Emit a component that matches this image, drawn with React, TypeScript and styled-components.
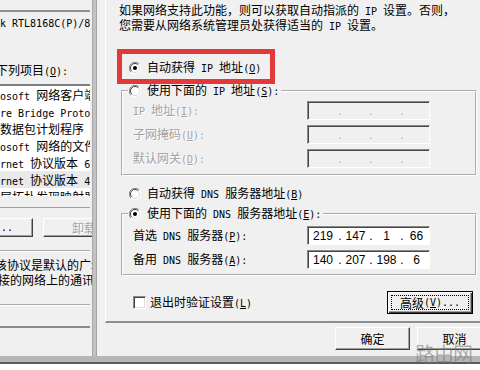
import React from "react";
import styled, { createGlobalStyle } from "styled-components";

const BG = "#f0f0f0";
const DISABLED = "#a2a2a2";

const GlobalStyle = createGlobalStyle`
  html, body { margin: 0; padding: 0; background: #ffffff; }
  body {
    font-family: "Noto Sans CJK SC", "Noto Sans", sans-serif;
    font-size: 12px;
    color: #000;
  }
  * { box-sizing: border-box; }
`;

const Lat = styled.span`
  font-family: "DejaVu Sans Mono", "Liberation Mono", monospace;
  font-size: 10px;
`;

const Key = styled.span`
  text-decoration: underline;
  text-underline-offset: 1px;
`;

function Txt({ s }: { s: string }) {
  const nodes: React.ReactNode[] = [];
  s.split(/(&.)/).forEach((tok, i) => {
    if (tok.length === 2 && tok[0] === "&") {
      nodes.push(
        <Lat key={`k${i}`}>
          <Key>{tok[1]}</Key>
        </Lat>
      );
      return;
    }
    tok.split(/([\x20-\x7e]+)/).forEach((p, j) => {
      if (!p) return;
      nodes.push(
        j % 2 ? (
          <Lat key={`${i}-${j}`}>{p}</Lat>
        ) : (
          <React.Fragment key={`${i}-${j}`}>{p}</React.Fragment>
        )
      );
    });
  });
  return <>{nodes}</>;
}

/* ---------- page frame ---------- */

const Screen = styled.div`
  position: relative;
  width: 480px;
  height: 370px;
  overflow: hidden;
  display: flex;
  flex-direction: column;
  background: ${BG};
  line-height: 14px;
`;

const Main = styled.div`
  display: flex;
  height: 356px;
  flex: none;
`;

const BottomBand = styled.div`
  height: 6px;
  flex: none;
  background: #b6b6b6;
`;

const BottomEdge = styled.div`
  height: 2px;
  flex: none;
  background: #5a5a5a;
`;

const BottomRest = styled.div`
  flex: 1;
  background: #ffffff;
`;

const VBar = styled.div`
  width: 5px;
  flex: none;
  background: #c2c2c2;
  border-left: 1px solid #a9a9a9;
  border-right: 1px solid #a3a3a3;
`;

/* ---------- background window ---------- */

const BackWindow = styled.div`
  width: 92px;
  flex: none;
  overflow: hidden;
  display: flex;
  flex-direction: column;
`;

const AdapterBox = styled.div`
  margin-top: 10px;
  width: 90px;
  height: 22px;
  border-top: 2px solid #909090;
  padding-top: 3px;
  white-space: nowrap;
  overflow: hidden;
`;

const ShiftLine = styled.div<{ $shift: number; $mt?: number }>`
  white-space: nowrap;
  margin-left: ${(p) => p.$shift}px;
  margin-top: ${(p) => p.$mt ?? 0}px;
`;

const ListBox = styled.div`
  margin-top: 5px;
  width: 90px;
  background: #ffffff;
  border-top: 2px solid #7d7d7d;
`;

const ListViewport = styled.div`
  height: 110px;
  overflow: hidden;
`;

const ListRow = styled.div<{ $selected?: boolean }>`
  height: 17px;
  line-height: 17px;
  white-space: nowrap;
  background: ${(p) => (p.$selected ? "#e9e9e9" : "transparent")};
`;

const HScroll = styled.div`
  height: 12px;
  background: ${BG};
  border-bottom: 1px solid #a0a0a0;
`;

const BackButtons = styled.div`
  margin-top: 10px;
  display: flex;
  gap: 10px;
`;

const Btn = styled.div<{ $w: number; $h: number; $ml?: number; $disabled?: boolean }>`
  flex: none;
  width: ${(p) => p.$w}px;
  height: ${(p) => p.$h}px;
  margin-left: ${(p) => p.$ml ?? 0}px;
  display: flex;
  align-items: center;
  justify-content: center;
  background: ${BG};
  border-top: 1px solid #ffffff;
  border-left: 1px solid #ffffff;
  border-right: 1px solid #404040;
  border-bottom: 1px solid #404040;
  box-shadow: inset -1px -1px 0 #a0a0a0;
  white-space: nowrap;
  color: ${(p) => (p.$disabled ? DISABLED : "#000")};
  text-shadow: ${(p) => (p.$disabled ? "1px 1px 0 #fff" : "none")};
`;

const DescGroup = styled.div`
  margin-top: 13px;
  width: 90px;
  border-top: 2px groove #ffffff;
  border-bottom: 2px groove #ffffff;
  padding: 5px 0 17px 0;
  line-height: 15px;
`;

const BackPageEdge = styled.div`
  margin-top: 20px;
  width: 90px;
  border-top: 2px solid #8a8a8a;
`;

/* ---------- front dialog ---------- */

const Dialog = styled.div`
  flex: 1;
  min-width: 0;
  padding-left: 8px;
  display: flex;
  flex-direction: column;
  overflow: hidden;
`;

const TabPage = styled.div`
  height: 323px;
  flex: none;
  border-left: 1px solid #ffffff;
  border-bottom: 2px solid #8e8e8e;
  padding-left: 11px;
  display: flex;
  flex-direction: column;
  align-items: flex-start;
`;

const Intro = styled.div`
  margin: 3px 0 0 2px;
  line-height: 13px;
  white-space: nowrap;
`;

const RedBox = styled.div`
  margin-top: 16px;
  width: 158px;
  height: 35px;
  flex: none;
  border: 5px solid #e2393b;
  display: flex;
  align-items: center;
  padding: 2px 0 0 7px;
`;

const OptionRow = styled.div<{ $mt?: number; $ml?: number }>`
  display: flex;
  align-items: center;
  gap: 6px;
  height: 14px;
  white-space: nowrap;
  margin-top: ${(p) => p.$mt ?? 0}px;
  margin-left: ${(p) => p.$ml ?? 0}px;
`;

const GroupBox = styled.fieldset<{ $mt: number }>`
  margin: ${(p) => p.$mt}px 0 0 4px;
  width: 356px;
  min-width: 0;
  padding: 0;
  border: 2px groove #ffffff;
`;

const Legend = styled.legend`
  margin-left: 5px;
  padding: 0 2px 0 1px;
  line-height: 14px;
`;

const GroupRows = styled.div<{ $mt: number; $pb: number }>`
  display: flex;
  flex-direction: column;
  gap: 5px;
  padding: ${(p) => p.$mt}px 0 ${(p) => p.$pb}px 10px;
`;

const FieldRow = styled.div`
  display: flex;
  align-items: center;
  height: 19px;
`;

const FieldLabel = styled.div<{ $disabled?: boolean }>`
  width: 174px;
  flex: none;
  white-space: nowrap;
  color: ${(p) => (p.$disabled ? DISABLED : "#000")};
  text-shadow: ${(p) => (p.$disabled ? "1px 1px 0 #fff" : "none")};
`;

const IpBox = styled.div<{ $enabled?: boolean }>`
  width: 123px;
  height: 19px;
  flex: none;
  display: grid;
  grid-template-columns: 30px 4px 27px 4px 27px 4px 1fr;
  align-items: center;
  background: ${(p) => (p.$enabled ? "#ffffff" : BG)};
  border-top: 1px solid #8a8a8a;
  border-left: 1px solid #8a8a8a;
  border-right: 1px solid #ffffff;
  border-bottom: 1px solid #ffffff;
  box-shadow: inset 1px 1px 0 #454545;
  font-family: "Liberation Sans", Arial, sans-serif;
  font-size: 12px;
  line-height: 17px;
  color: #000;
`;

const Octet = styled.span`
  text-align: center;
  padding-top: 1px;
`;

const Dot = styled.span<{ $enabled?: boolean }>`
  text-align: center;
  color: ${(p) => (p.$enabled ? "#000" : "#b0b0b0")};
  padding-top: 1px;
`;

const FooterRow = styled.div`
  margin: 15px 0 0 4px;
  width: 356px;
  height: 23px;
  flex: none;
  padding: 0 4px 0 12px;
  display: flex;
  align-items: center;
  justify-content: space-between;
`;

const CheckRow = styled.div`
  display: flex;
  align-items: center;
  gap: 4px;
  white-space: nowrap;
`;

const CheckBox = styled.span`
  width: 13px;
  height: 13px;
  flex: none;
  background: #ffffff;
  border-top: 1px solid #8a8a8a;
  border-left: 1px solid #8a8a8a;
  border-right: 1px solid #ffffff;
  border-bottom: 1px solid #ffffff;
  box-shadow: inset 1px 1px 0 #404040, inset -1px -1px 0 #dcdcdc;
`;

const DefaultBtn = styled.div`
  width: 86px;
  height: 23px;
  flex: none;
  display: flex;
  padding: 3px;
  background: ${BG};
  border: 1px solid #000;
  box-shadow: inset 1px 1px 0 #fff, inset -1px -1px 0 #404040, inset -2px -2px 0 #a0a0a0;
`;

const FocusRect = styled.div`
  flex: 1;
  display: flex;
  align-items: center;
  justify-content: center;
  border: 1px dotted #000;
  white-space: nowrap;
`;

const DialogButtons = styled.div`
  margin-top: 4px;
  padding-left: 230px;
  display: flex;
  gap: 7px;
`;

const Watermark = styled.div`
  position: absolute;
  left: 415px;
  top: 342px;
  font-size: 20px;
  line-height: 24px;
  letter-spacing: -1px;
  color: rgba(115, 115, 115, 0.55);
  pointer-events: none;
`;

function Radio({ checked }: { checked?: boolean }) {
  return (
    <svg width="12" height="12" viewBox="0 0 12 12" style={{ flex: "none" }}>
      <circle cx="6" cy="6" r="5.3" fill="#fff" />
      <path d="M1.9 10.1 A5.8 5.8 0 0 1 10.1 1.9" stroke="#808080" fill="none" />
      <path d="M10.1 1.9 A5.8 5.8 0 0 1 1.9 10.1" stroke="#ffffff" fill="none" />
      <path d="M2.8 9.2 A4.5 4.5 0 0 1 9.2 2.8" stroke="#404040" fill="none" />
      <path d="M9.2 2.8 A4.5 4.5 0 0 1 2.8 9.2" stroke="#d8d8d8" fill="none" />
      {checked && <circle cx="6" cy="6" r="2" fill="#000" />}
    </svg>
  );
}

function IpField({ values, enabled }: { values?: string[]; enabled?: boolean }) {
  const v = values ?? ["", "", "", ""];
  return (
    <IpBox $enabled={enabled}>
      <Octet>{v[0]}</Octet>
      <Dot $enabled={enabled}>.</Dot>
      <Octet>{v[1]}</Octet>
      <Dot $enabled={enabled}>.</Dot>
      <Octet>{v[2]}</Octet>
      <Dot $enabled={enabled}>.</Dot>
      <Octet>{v[3]}</Octet>
    </IpBox>
  );
}

const listItems = [
  "osoft 网络客户端",
  "re Bridge Protocol",
  "数据包计划程序",
  "osoft 网络的文件和打印机共享",
  "rnet 协议版本 6 (TCP/IPv6)",
  "rnet 协议版本 4 (TCP/IPv4)",
  "层拓扑发现映射器 I/O 驱动程序",
];

export default function App() {
  return (
    <>
      <GlobalStyle />
      <Screen>
        <Main>
          <BackWindow>
            <AdapterBox>
              <Txt s="k RTL8168C(P)/8111C(P) PCI-E" />
            </AdapterBox>
            <ShiftLine $shift={-4} $mt={31}>
              <Txt s="下列项目(&O):" />
            </ShiftLine>
            <ListBox>
              <ListViewport>
                {listItems.map((t, i) => (
                  <ListRow key={t} $selected={i === 5}>
                    <Txt s={t} />
                  </ListRow>
                ))}
              </ListViewport>
              <HScroll />
            </ListBox>
            <BackButtons>
              <Btn $w={100} $h={19} $ml={-67}>
                <Txt s="安装(&N)..." />
              </Btn>
              <Btn $w={100} $h={19} $disabled>
                <Txt s="卸载(&U)" />
              </Btn>
            </BackButtons>
            <DescGroup>
              <ShiftLine $shift={-5}>该协议是默认的广域网络协议</ShiftLine>
              <ShiftLine $shift={-2}>接的网络上的通讯。</ShiftLine>
            </DescGroup>
            <BackPageEdge />
          </BackWindow>
          <VBar />
          <Dialog>
            <TabPage>
              <Intro>
                <div>
                  <Txt s="如果网络支持此功能，则可以获取自动指派的 IP 设置。否则，" />
                </div>
                <div>
                  <Txt s="您需要从网络系统管理员处获得适当的 IP 设置。" />
                </div>
              </Intro>
              <RedBox>
                <OptionRow>
                  <Radio checked />
                  <span>
                    <Txt s="自动获得 IP 地址(&O)" />
                  </span>
                </OptionRow>
              </RedBox>
              <GroupBox $mt={0}>
                <Legend>
                  <OptionRow>
                    <Radio />
                    <span>
                      <Txt s="使用下面的 IP 地址(&S):" />
                    </span>
                  </OptionRow>
                </Legend>
                <GroupRows $mt={3} $pb={6}>
                  <FieldRow>
                    <FieldLabel $disabled>
                      <Txt s="IP 地址(&I):" />
                    </FieldLabel>
                    <IpField />
                  </FieldRow>
                  <FieldRow>
                    <FieldLabel $disabled>
                      <Txt s="子网掩码(&U):" />
                    </FieldLabel>
                    <IpField />
                  </FieldRow>
                  <FieldRow>
                    <FieldLabel $disabled>
                      <Txt s="默认网关(&D):" />
                    </FieldLabel>
                    <IpField />
                  </FieldRow>
                </GroupRows>
              </GroupBox>
              <OptionRow $mt={11} $ml={12}>
                <Radio />
                <span>
                  <Txt s="自动获得 DNS 服务器地址(&B)" />
                </span>
              </OptionRow>
              <GroupBox $mt={6}>
                <Legend>
                  <OptionRow>
                    <Radio checked />
                    <span>
                      <Txt s="使用下面的 DNS 服务器地址(&E):" />
                    </span>
                  </OptionRow>
                </Legend>
                <GroupRows $mt={5} $pb={5}>
                  <FieldRow>
                    <FieldLabel>
                      <Txt s="首选 DNS 服务器(&P):" />
                    </FieldLabel>
                    <IpField enabled values={["219", "147", "1", "66"]} />
                  </FieldRow>
                  <FieldRow>
                    <FieldLabel>
                      <Txt s="备用 DNS 服务器(&A):" />
                    </FieldLabel>
                    <IpField enabled values={["140", "207", "198", "6"]} />
                  </FieldRow>
                </GroupRows>
              </GroupBox>
              <FooterRow>
                <CheckRow>
                  <CheckBox />
                  <span>
                    <Txt s="退出时验证设置(&L)" />
                  </span>
                </CheckRow>
                <DefaultBtn>
                  <FocusRect>
                    <Txt s="高级(&V)..." />
                  </FocusRect>
                </DefaultBtn>
              </FooterRow>
            </TabPage>
            <DialogButtons>
              <Btn $w={75} $h={23}>确定</Btn>
              <Btn $w={75} $h={23}>取消</Btn>
            </DialogButtons>
          </Dialog>
        </Main>
        <BottomBand />
        <BottomEdge />
        <BottomRest />
        <Watermark>路由网</Watermark>
      </Screen>
    </>
  );
}
